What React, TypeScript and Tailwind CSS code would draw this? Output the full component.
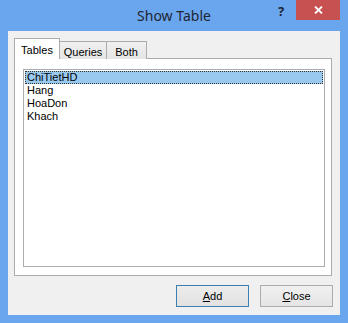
import React from "react";

export default function App() {
  const items = ["ChiTietHD", "Hang", "HoaDon", "Khach"];
  return (
    <div
      className="w-[348px] h-[323px] bg-[#6aa6ee] flex flex-col overflow-hidden"
      style={{ fontFamily: '"Liberation Sans", Arial, sans-serif' }}
    >
      {/* Title bar */}
      <div className="relative h-[31px] shrink-0 flex items-center justify-center">
        <span
          className="text-[14px] text-[#1e2533] mt-[-1px]"
          style={{ fontFamily: '"Noto Sans", sans-serif' }}
        >
          Show Table
        </span>
        <span
          className="absolute left-[278px] top-[2px] text-[13px] font-bold text-[#1e2533]"
          style={{ fontFamily: '"Noto Sans", sans-serif' }}
        >
          ?
        </span>
        <div className="absolute right-[8px] top-0 w-[44px] h-[20px] bg-[#c75050] flex items-center justify-center">
          <svg width="9" height="8" viewBox="0 0 9 8">
            <path d="M1 0.5 L8 7.5 M8 0.5 L1 7.5" stroke="#fff" strokeWidth="1.8" />
          </svg>
        </div>
      </div>

      {/* Client area */}
      <div className="mx-[8px] mb-[8px] flex-1 bg-[#f0f0f0] flex flex-col pl-[6px] pr-[8px] pt-[7px]">
        {/* Tabs */}
        <div className="flex items-end h-[21px] relative z-10">
          <div className="h-[21px] w-[46px] bg-white border border-[#acacac] border-b-0 flex items-start justify-center pt-[3px] text-[11px] text-black">
            Tables
          </div>
          <div className="h-[18px] w-[47px] bg-gradient-to-b from-[#f0f0f0] to-[#e5e5e5] border border-[#acacac] border-l-0 border-b-0 flex items-start justify-center pt-[2px] text-[11px] text-black">
            Queries
          </div>
          <div className="h-[18px] w-[40px] bg-gradient-to-b from-[#f0f0f0] to-[#e5e5e5] border border-[#acacac] border-l-0 border-b-0 flex items-start justify-center pt-[2px] text-[11px] text-black">
            Both
          </div>
        </div>
        {/* Panel */}
        <div className="-mt-px h-[218px] bg-white border border-[#acacac] pl-[8px] pr-[6px] pt-[10px] pb-[8px] flex">
          <div className="flex-1 border border-[#abadb3] bg-white pt-px px-px">
            {items.map((it, i) => (
              <div
                key={it}
                className={
                  "h-[13px] leading-[13px] text-[11px] text-black pl-[2px] " +
                  (i === 0 ? "bg-[#99c9ef] outline outline-1 outline-dotted outline-[#333] -outline-offset-1" : "")
                }
              >
                {it}
              </div>
            ))}
          </div>
        </div>
        {/* Buttons */}
        <div className="flex justify-end gap-[11px] mt-[9px] pr-[-1px] mr-[-1px]">
          <button className="w-[73px] h-[22px] border border-[#3c7fb1] bg-gradient-to-b from-[#ececec] to-[#e2e2e2] text-[11px] text-black flex items-center justify-center">
            <span>
              <u>A</u>dd
            </span>
          </button>
          <button className="w-[73px] h-[22px] border border-[#acacac] bg-gradient-to-b from-[#f0f0f0] to-[#e5e5e5] text-[11px] text-black flex items-center justify-center">
            <span>
              <u>C</u>lose
            </span>
          </button>
        </div>
      </div>
    </div>
  );
}
